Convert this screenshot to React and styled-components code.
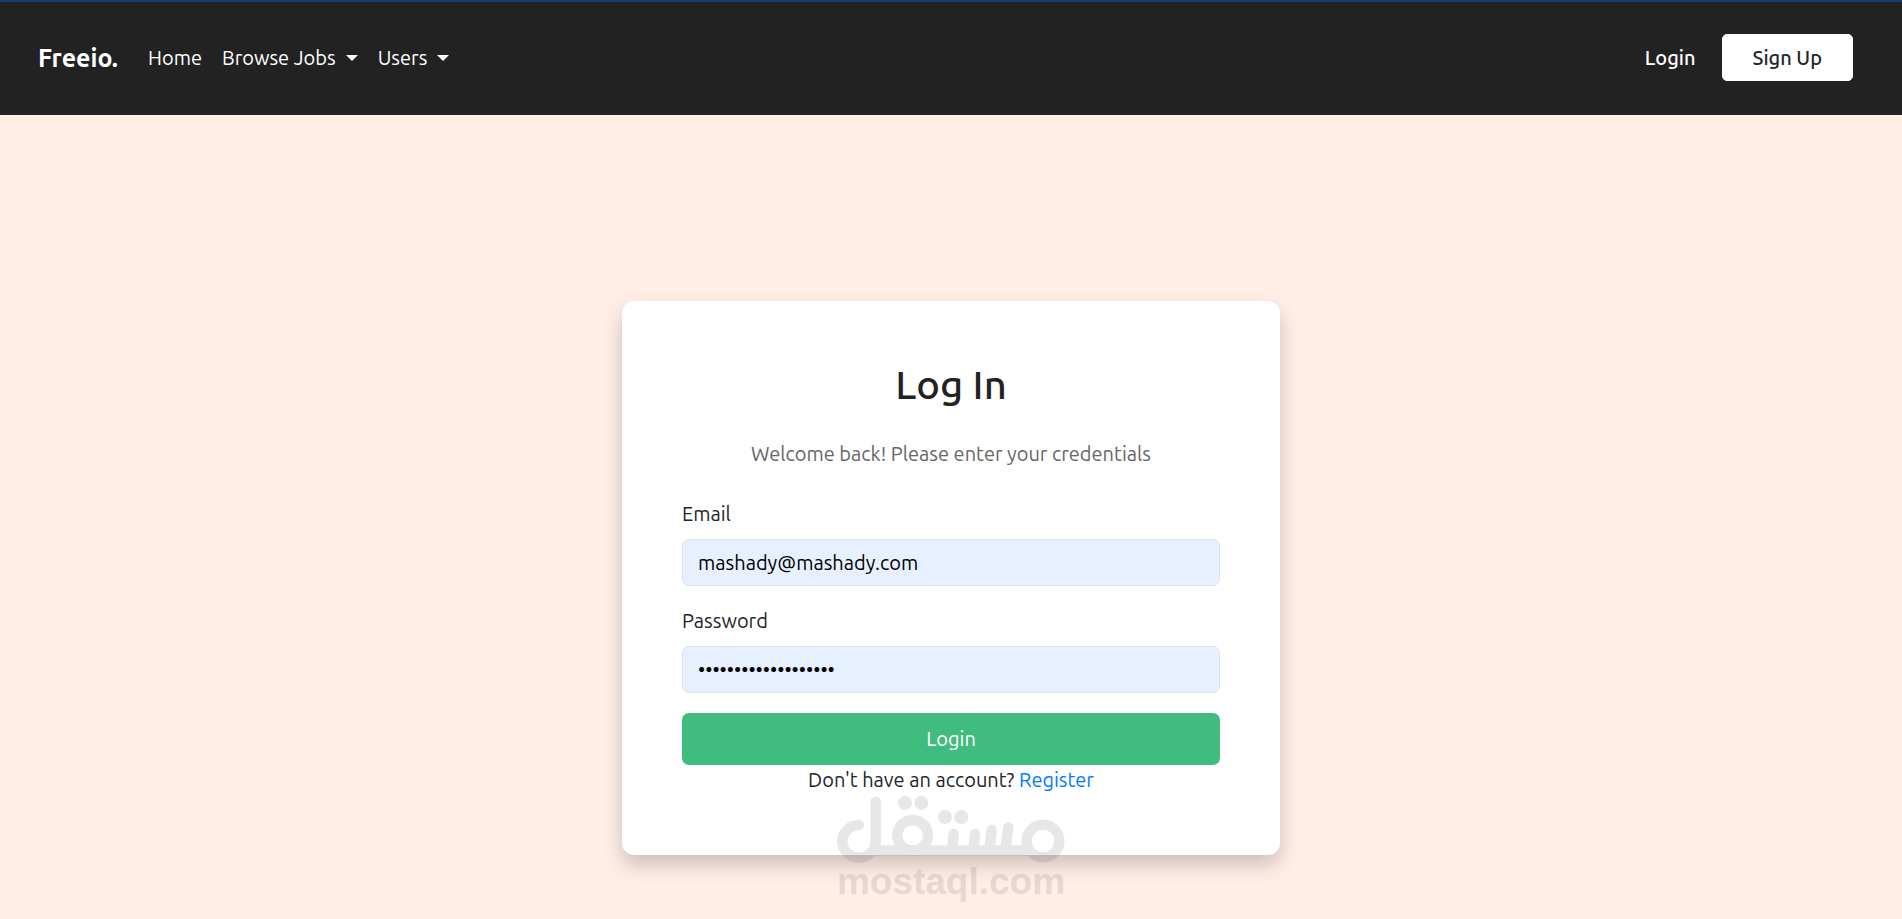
import React from 'react';
import styled, { createGlobalStyle } from 'styled-components';

const GlobalStyle = createGlobalStyle`
  *, *::before, *::after { box-sizing: border-box; }
  body {
    margin: 0;
    background: #ffede6;
    color: #212529;
    font-family: Ubuntu, "Noto Sans", "Open Sans", sans-serif;
    font-size: 20px;
    line-height: 30px;
  }
  input, button { font: inherit; }
`;

const Page = styled.div`
  position: relative;
  min-height: 100vh;
  display: flex;
  flex-direction: column;
`;

const Header = styled.header`
  display: flex;
  align-items: center;
  height: 115px;
  padding: 0 49px 2px 38px;
  background: #222222;
  border-top: 2px solid #163e70;
`;

const Brand = styled.a`
  margin-right: 20px;
  color: #ffffff;
  font-size: 25px;
  font-weight: 700;
  text-decoration: none;
`;

const Nav = styled.nav`
  display: flex;
  align-items: center;
`;

const NavLink = styled.a`
  display: flex;
  align-items: center;
  padding: 10px;
  color: #ffffff;
  text-decoration: none;
`;

const NavToggle = styled.button`
  display: flex;
  align-items: center;
  gap: 10px;
  padding: 10px;
  border: 0;
  background: none;
  color: #ffffff;
  cursor: pointer;

  &::after {
    content: "";
    border: 6px solid transparent;
    border-top-color: currentColor;
    border-bottom: 0;
  }
`;

const Account = styled.div`
  display: flex;
  align-items: center;
  gap: 26px;
  margin-left: auto;
  font-weight: 500;
`;

const AccountLink = styled.a`
  color: #ffffff;
  text-decoration: none;
`;

const SignUpButton = styled.button`
  height: 47px;
  padding: 0 30px;
  border: 1px solid #ffffff;
  border-radius: 5px;
  background: #ffffff;
  color: #212529;
  cursor: pointer;
`;

const Main = styled.main`
  display: flex;
  justify-content: center;
  padding: 186px 20px 64px;
`;

const Card = styled.form`
  width: 100%;
  max-width: 658px;
  padding: 60px;
  border-radius: 12px;
  background: #ffffff;
  box-shadow: 0 10px 20px rgba(0, 0, 0, 0.19);
`;

const Title = styled.h1`
  margin: 0 0 30px;
  color: #222222;
  font-size: 40px;
  font-weight: 500;
  line-height: 48px;
  text-align: center;
`;

const Intro = styled.p`
  margin: 0 0 30px;
  color: #666666;
  text-align: center;
`;

const Field = styled.div`
  display: flex;
  flex-direction: column;
  gap: 10px;
  margin-bottom: 20px;
`;

const Input = styled.input`
  width: 100%;
  height: 47px;
  padding: 0 15px;
  border: 1px solid #dbe2ea;
  border-radius: 7px;
  outline: 0;
  background: #e6f0ff;
  color: #000000;
`;

const SubmitButton = styled.button`
  display: block;
  width: 100%;
  height: 52px;
  border: 0;
  border-radius: 7px;
  background: #40bd7e;
  color: #ffffff;
  cursor: pointer;
`;

const RegisterNote = styled.p`
  margin: 0;
  text-align: center;

  a {
    color: #007bff;
    text-decoration: none;
  }
`;

const Watermark = styled.div`
  position: absolute;
  right: 0;
  bottom: 18px;
  left: 0;
  display: flex;
  flex-direction: column;
  align-items: center;
  color: #2b3038;
  font: 700 37px/38px "Liberation Sans", Arial, sans-serif;
  opacity: 0.11;
  pointer-events: none;

  svg { display: block; }
`;

function MostaqlLogo() {
  return (
    <svg width="230" height="68" viewBox="168 315 690 204" fill="none" stroke="currentColor" strokeWidth="31" strokeLinecap="round" aria-hidden="true">
      <path d="M287 335V452A50 49 0 1 1 237 405" />
      <path d="M283 481H745" strokeLinecap="butt" />
      <circle cx="398" cy="436" r="46" />
      <circle cx="789" cy="453" r="49" />
      <path d="M521 432L516 481M585 432L580 481M635 420L628 481M685 412L676 481" />
      <g fill="currentColor" stroke="none">
        <circle cx="375" cy="339" r="21" />
        <circle cx="424" cy="339" r="21" />
        <circle cx="495" cy="381" r="21" />
        <circle cx="544" cy="381" r="21" />
      </g>
    </svg>
  );
}

export default function App() {
  return (
    <Page>
      <GlobalStyle />
      <Header>
        <Brand href="#">Freeio.</Brand>
        <Nav>
          <NavLink href="#">Home</NavLink>
          <NavToggle type="button">Browse Jobs</NavToggle>
          <NavToggle type="button">Users</NavToggle>
        </Nav>
        <Account>
          <AccountLink href="#">Login</AccountLink>
          <SignUpButton type="button">Sign Up</SignUpButton>
        </Account>
      </Header>
      <Main>
        <Card onSubmit={(e) => e.preventDefault()}>
          <Title>Log In</Title>
          <Intro>Welcome back! Please enter your credentials</Intro>
          <Field>
            <label htmlFor="email">Email</label>
            <Input id="email" type="email" defaultValue="mashady@mashady.com" />
          </Field>
          <Field>
            <label htmlFor="password">Password</label>
            <Input id="password" type="password" defaultValue="mashady@mashady.com" />
          </Field>
          <SubmitButton type="submit">Login</SubmitButton>
          <RegisterNote>
            Don't have an account? <a href="#">Register</a>
          </RegisterNote>
        </Card>
      </Main>
      <Watermark>
        <MostaqlLogo />
        <span>mostaql.com</span>
      </Watermark>
    </Page>
  );
}
